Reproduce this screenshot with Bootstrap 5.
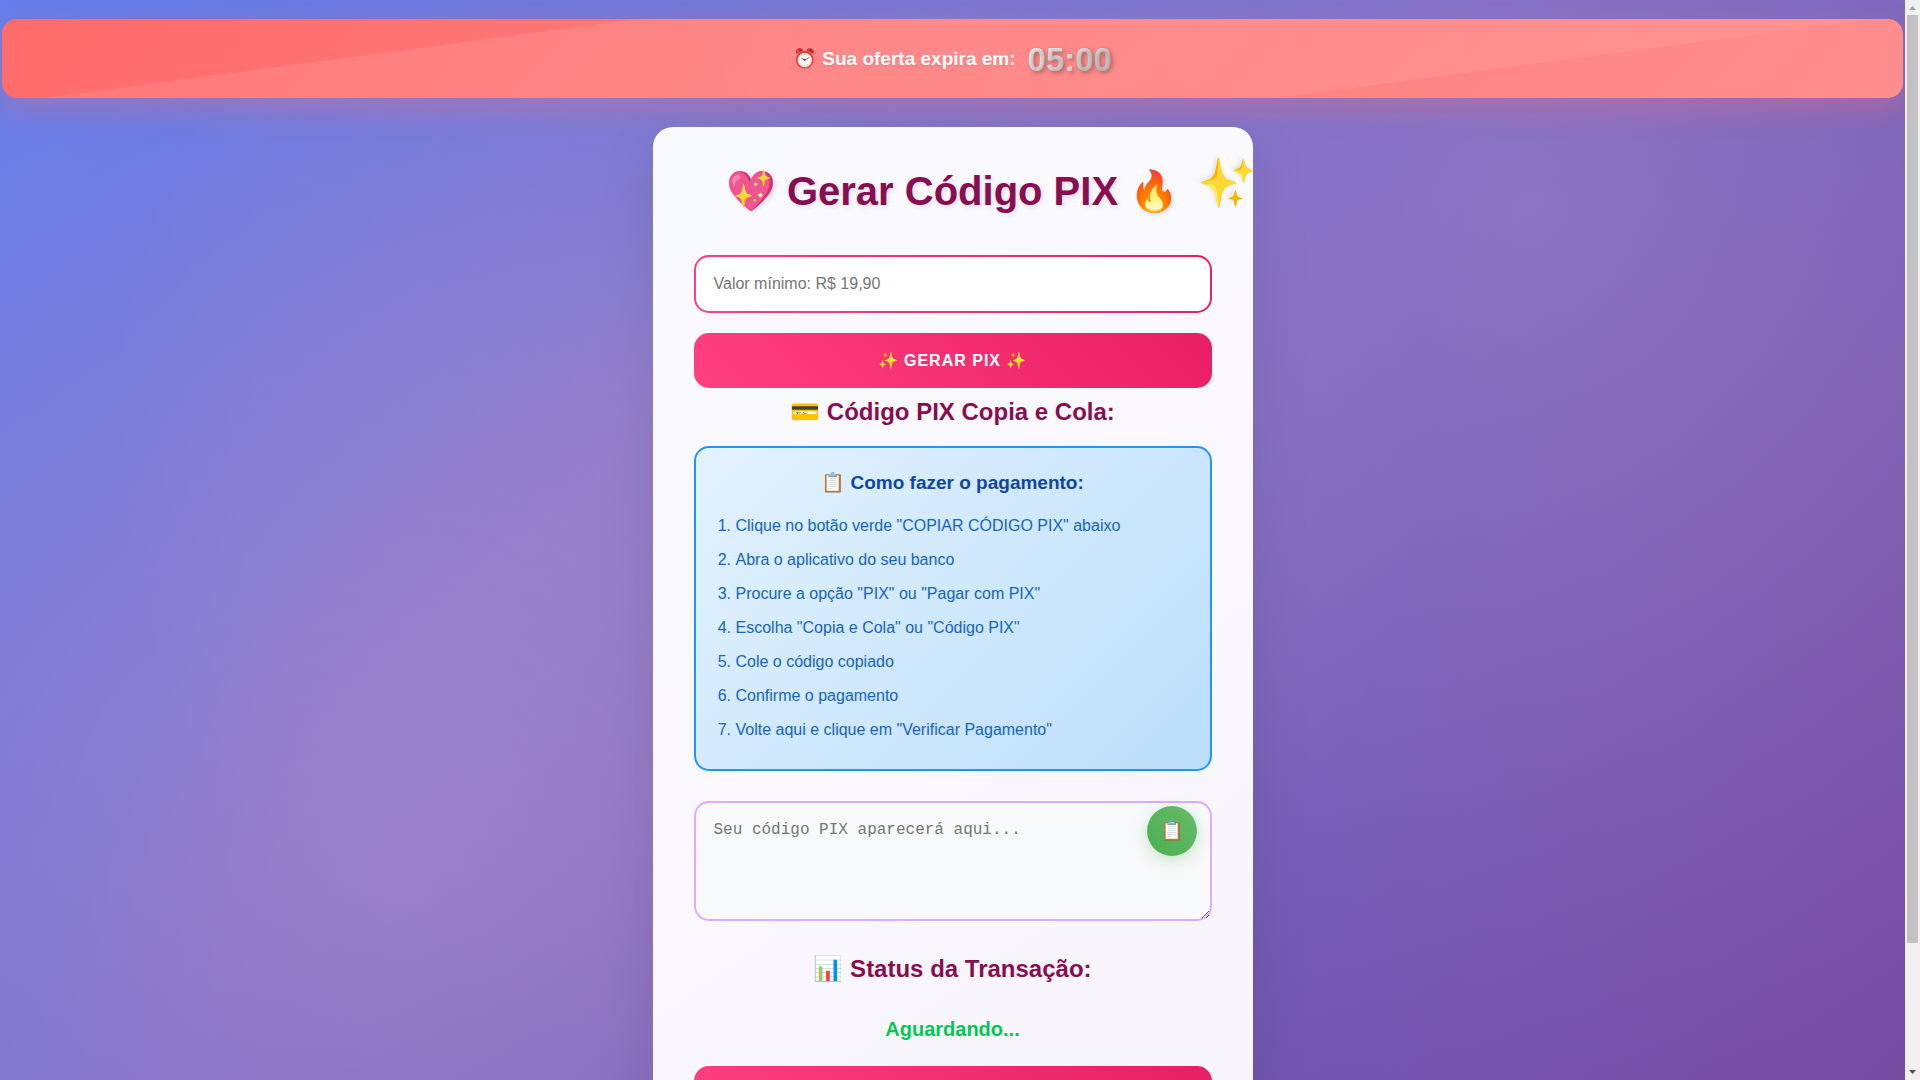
<!DOCTYPE html>
<html lang="pt-BR">
<head>
<meta charset="utf-8">
<meta name="viewport" content="width=device-width, initial-scale=1">
<title>Gerar Código PIX</title>
<link href="https://cdn.jsdelivr.net/npm/bootstrap@5.3.0/dist/css/bootstrap.min.css" rel="stylesheet">
<style>
html { scrollbar-width: none; }
body {
  font-family: "Liberation Sans", Arial, sans-serif;
  min-height: 100vh;
  padding-right: 15px;
  background:
    radial-gradient(circle at 20% 80%, rgba(255,182,193,.3) 0%, transparent 50%),
    radial-gradient(circle at 80% 20%, rgba(255,192,203,.2) 0%, transparent 50%),
    radial-gradient(circle at 40% 40%, rgba(255,182,193,.2) 0%, transparent 50%),
    linear-gradient(135deg, #667eea 0%, #764ba2 100%);
  background-attachment: fixed;
}
.offer-bar {
  margin: 19px 2px 29px;
  height: 79px;
  padding-top: 2px;
  gap: 12px;
  border-radius: 15px;
  background: linear-gradient(135deg, #ff6b6b, #ff8e8e);
  box-shadow: 0 12px 28px rgba(255,107,107,.3);
  color: #fff;
  font-size: 19px;
  font-weight: 700;
}
.offer-bar::before {
  content: "";
  position: absolute;
  inset: 0;
  background: linear-gradient(90deg, rgba(255,255,255,.08), rgba(255,255,255,.1) 40%, rgba(255,255,255,.05));
  clip-path: polygon(33.5% 0, 98.4% 0, 67% 100%, 2.2% 100%);
}
.offer-label { text-shadow: 0 1px 2px rgba(0,0,0,.1); }
.offer-clock {
  font-size: 33px;
  line-height: 40px;
  background: linear-gradient(135deg, #f0f0f0, #b8b8b8);
  -webkit-background-clip: text;
  background-clip: text;
  color: rgba(255,255,255,.25);
  text-shadow: 2px 2px 4px rgba(0,0,0,.3);
}
.pix-panel {
  max-width: 600px;
  padding: 41px;
  border-radius: 20px;
  background: linear-gradient(145deg, #f9fafe, #faf8fd 50%, #f7f5fb);
  box-shadow: 0 20px 60px rgba(0,0,0,.1);
}
.pix-title {
  font-size: 40px;
  line-height: 46px;
  margin-bottom: 41px;
  font-weight: 700;
  color: #880e4f;
  text-shadow: 2px 2px 4px rgba(0,0,0,.1);
}
.pix-spark { right: -45px; top: -10px; font-size: 48px; line-height: 48px; transform: rotate(180deg); }
.pix-input {
  height: 58px;
  padding: 0 18px;
  border: 2px solid transparent;
  border-radius: 15px;
  font-size: 16px;
  background: linear-gradient(#fff, #fff) padding-box, linear-gradient(45deg, #ff4081, #e91e63) border-box;
}
.pix-input::placeholder, .pix-code::placeholder { color: #757575; }
.pix-btn {
  height: 55px;
  border: 0;
  border-radius: 15px;
  background: linear-gradient(45deg, #ff4081, #e91e63);
  color: #fff;
  font-size: 16px;
  font-weight: 700;
  letter-spacing: 1px;
}
.pix-btn:hover { color: #fff; }
.pix-generate { margin-top: 20px; }
.pix-heading { margin: 5px 0 15px; font-size: 24px; line-height: 38px; font-weight: 700; color: #880e4f; }
.pix-steps {
  margin-bottom: 30px;
  padding: 20px 20px 18px;
  border: 2px solid #2196f3;
  border-radius: 15px;
  background: linear-gradient(135deg, #e3f2fd, #bbdefb);
  color: #1565c0;
}
.pix-steps h3 { margin-bottom: 15px; font-size: 19px; line-height: 30px; font-weight: 700; color: #0d47a1; }
.pix-steps ol { margin: 0; padding-left: 20px; }
.pix-steps li { line-height: 26px; margin-bottom: 8px; }
.pix-code {
  height: 120px;
  padding: 16px 18px;
  border: 2px solid #e0aaff;
  border-radius: 15px;
  background: #f8f9fa;
  font-family: "Liberation Mono", "Courier New", monospace;
  font-size: 16px;
  line-height: 22px;
}
.pix-copy {
  top: 5px;
  right: 15px;
  width: 50px;
  height: 50px;
  border: 0;
  background: linear-gradient(45deg, #4caf50, #66bb6a);
  box-shadow: 0 4px 15px rgba(76,175,80,.3);
  font-size: 19px;
}
.pix-result { margin: 29px 0 25px; }
.pix-status { margin-bottom: 21px; font-size: 20px; line-height: 32px; font-weight: 700; color: #00c853; }
.page-track { width: 15px; background: #f1f1f1; }
.page-track svg { width: 15px; height: 15px; }
.page-thumb { width: 11px; height: 88.4%; background: #c1c1c1; }
</style>
</head>
<body>
<div class="offer-bar position-relative d-flex align-items-center justify-content-center">
  <span class="offer-label position-relative">⏰ Sua oferta expira em:</span>
  <span class="offer-clock position-relative">05:00</span>
</div>
<main class="pix-panel position-relative overflow-hidden container-fluid mx-auto mb-5">
  <h1 class="pix-title position-relative text-center">💖 Gerar Código PIX 🔥<span class="pix-spark position-absolute" aria-hidden="true">✨</span></h1>
  <input id="valor" type="text" class="pix-input form-control" aria-label="Valor" placeholder="Valor mínimo: R$ 19,90">
  <button type="button" class="pix-btn pix-generate btn w-100">✨ GERAR PIX ✨</button>
  <h2 class="pix-heading text-center">💳 Código PIX Copia e Cola:</h2>
  <section class="pix-steps">
    <h3 class="text-center">📋 Como fazer o pagamento:</h3>
    <ol>
      <li>Clique no botão verde "COPIAR CÓDIGO PIX" abaixo</li>
      <li>Abra o aplicativo do seu banco</li>
      <li>Procure a opção "PIX" ou "Pagar com PIX"</li>
      <li>Escolha "Copia e Cola" ou "Código PIX"</li>
      <li>Cole o código copiado</li>
      <li>Confirme o pagamento</li>
      <li>Volte aqui e clique em "Verificar Pagamento"</li>
    </ol>
  </section>
  <div class="position-relative">
    <textarea id="codigo" class="pix-code form-control" aria-label="Código PIX" placeholder="Seu código PIX aparecerá aqui..." readonly></textarea>
    <button type="button" class="pix-copy btn rounded-circle position-absolute p-0" aria-label="Copiar código PIX">📋</button>
  </div>
  <h2 class="pix-heading pix-result text-center">📊 Status da Transação:</h2>
  <p class="pix-status text-center">Aguardando...</p>
  <button type="button" class="pix-btn btn w-100" aria-label="Verificar Pagamento"></button>
</main>
<div class="page-track position-fixed top-0 end-0 vh-100 d-flex flex-column align-items-center" aria-hidden="true">
  <svg class="flex-shrink-0" viewBox="0 0 15 15"><path d="M4 10h7L7.500 6z" fill="#a3a3a3"/></svg>
  <div class="flex-grow-1 w-100 d-flex justify-content-center"><div class="page-thumb"></div></div>
  <svg class="flex-shrink-0" viewBox="0 0 15 15"><path d="M4 5h7L7.500 9z" fill="#505050"/></svg>
</div>
<script src="https://cdn.jsdelivr.net/npm/bootstrap@5.3.0/dist/js/bootstrap.bundle.min.js"></script>
</body>
</html>
